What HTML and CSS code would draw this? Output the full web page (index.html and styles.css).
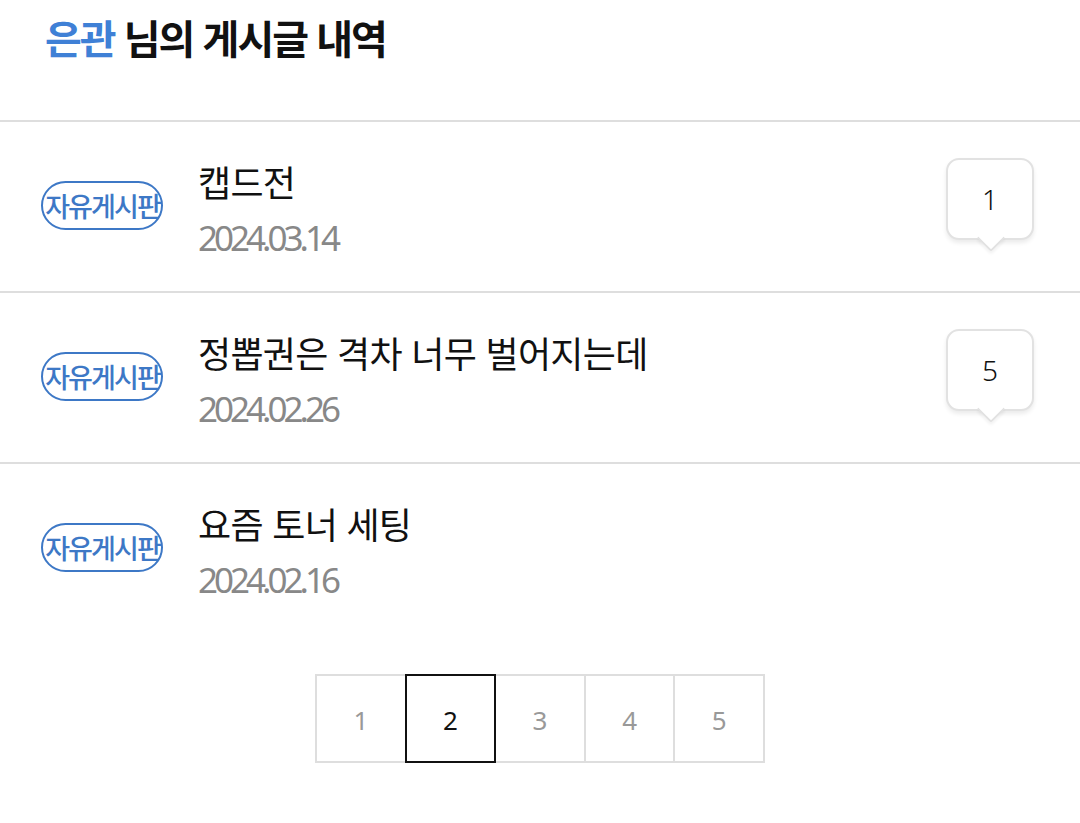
FILE: index.html
```html
<!DOCTYPE html>
<html lang="ko">
<head>
<meta charset="utf-8">
<link rel="stylesheet" href="styles.css">
</head>
<body>
<div class="page">
  <header class="head">
    <h1 class="head-title"><span class="nick">은관</span> 님의 게시글 내역</h1>
  </header>
  <ul class="posts">
    <li class="post">
      <span class="badge">자유게시판</span>
      <div class="post-text">
        <div class="post-title">캡드전</div>
        <div class="post-date">2024.03.14</div>
      </div>
      <div class="bubble">1</div>
    </li>
    <li class="post">
      <span class="badge">자유게시판</span>
      <div class="post-text">
        <div class="post-title">정뽑권은 격차 너무 벌어지는데</div>
        <div class="post-date">2024.02.26</div>
      </div>
      <div class="bubble">5</div>
    </li>
    <li class="post">
      <span class="badge">자유게시판</span>
      <div class="post-text">
        <div class="post-title">요즘 토너 세팅</div>
        <div class="post-date">2024.02.16</div>
      </div>
    </li>
  </ul>
  <nav class="pager">
    <a class="pg">1</a>
    <a class="pg pg-active">2</a>
    <a class="pg">3</a>
    <a class="pg">4</a>
    <a class="pg">5</a>
  </nav>
</div>
</body>
</html>
```

FILE: styles.css
```css
* { box-sizing: border-box; }
html, body { margin: 0; padding: 0; background: #fff; }
body {
  font-family: "Noto Sans CJK KR", "Noto Sans", sans-serif;
  color: #111;
}
.page { width: 1080px; }

.head {
  height: 122px;
  border-bottom: 2px solid #dedede;
  padding: 12px 0 0 45px;
}
.head-title {
  margin: 0;
  font-size: 40px;
  line-height: 50px;
  font-weight: 700;
  letter-spacing: -2px;
  color: #111;
}
.nick { color: #3f80d6; }

.posts { list-style: none; margin: 0; padding: 0; }
.post {
  height: 171px;
  border-bottom: 2px solid #dedede;
  display: flex;
  align-items: center;
  padding: 0 46px 0 41px;
}
.post:last-child { border-bottom: none; height: 169px; }

.badge {
  width: 122px;
  height: 49px;
  border: 2px solid #3d78c6;
  border-radius: 25px;
  color: #3d78c6;
  font-size: 27px;
  font-weight: 500;
  letter-spacing: -1.9px;
  display: flex;
  align-items: center;
  justify-content: center;
  flex: none;
  margin-top: -2px;
  padding-left: 1px;
}

.post-text {
  flex: 1;
  margin-left: 35px;
  margin-top: 5px;
}
.post-title {
  font-size: 36px;
  line-height: 44px;
  letter-spacing: -0.7px;
  color: #111;
}
.post-date {
  font-family: "Noto Sans", sans-serif;
  font-size: 35px;
  line-height: 44px;
  color: #888;
  margin-top: 13px;
  letter-spacing: -4px;
}

.bubble {
  position: relative;
  width: 88px;
  height: 82px;
  border: 2px solid #e2e2e2;
  border-radius: 13px;
  box-shadow: 0 3px 4px rgba(0,0,0,0.08);
  background: #fff;
  display: flex;
  align-items: center;
  justify-content: center;
  font-family: "Noto Sans", sans-serif;
  font-size: 28px;
  font-weight: 300;
  color: #111;
  margin-bottom: 16px;
  flex: none;
}
.bubble::after {
  content: "";
  position: absolute;
  left: 50%;
  bottom: -10px;
  width: 18px;
  height: 18px;
  margin-left: -9px;
  background: #fff;
  border-right: 2px solid #e2e2e2;
  border-bottom: 2px solid #e2e2e2;
  border-bottom-right-radius: 3px;
  transform: rotate(45deg);
  box-shadow: 2px 2px 3px rgba(0,0,0,0.05);
}

.pager {
  display: flex;
  justify-content: center;
  margin-top: 41px;
}
.pg {
  width: 91.6px;
  height: 89px;
  border: 2px solid #dedede;
  margin-left: -2px;
  display: flex;
  align-items: center;
  justify-content: center;
  font-family: "Noto Sans", sans-serif;
  font-size: 26px;
  color: #999;
  background: #fff;
  padding-top: 2px;
}
.pg:first-child { margin-left: 0; }
.pg-active {
  position: relative;
  z-index: 1;
  border-color: #111;
  color: #111;
}
```
